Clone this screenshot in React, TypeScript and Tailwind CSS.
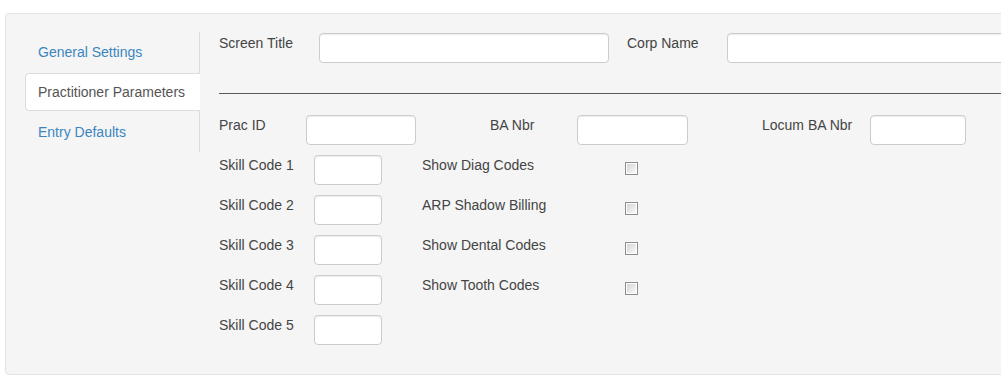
import React from 'react';

const inputCls =
  'shrink-0 h-[30px] bg-white border border-[#cccccc] rounded-[4px] shadow-[inset_0_1px_1px_rgba(0,0,0,0.075)] outline-none px-2 text-[14px]';

function Checkbox() {
  return (
    <span className="shrink-0 mt-[7px] block w-[13px] h-[13px] border border-[#8e8e8e] bg-white p-px">
      <span className="block w-full h-full bg-gradient-to-br from-[#d4d4d4] to-[#fafafa]" />
    </span>
  );
}

const skills = [
  { code: 'Skill Code 1', flag: 'Show Diag Codes' },
  { code: 'Skill Code 2', flag: 'ARP Shadow Billing' },
  { code: 'Skill Code 3', flag: 'Show Dental Codes' },
  { code: 'Skill Code 4', flag: 'Show Tooth Codes' },
  { code: 'Skill Code 5', flag: '' },
];

export default function App() {
  return (
    <div className="w-[1001px] h-[383px] overflow-hidden bg-white font-['Liberation_Sans',Arial,sans-serif] text-[14px] leading-5 text-[#444444]">
      <div className="ml-[5px] mt-[13px] w-[1030px] h-[362px] bg-[#f5f5f5] border border-[#e3e3e3] rounded-[4px] pl-[19px] pt-[18px] flex items-start">
        {/* ─ Tabs ─ */}
        <div className="shrink-0 w-[175px] h-[120px] border-r border-[#dddddd] flex flex-col">
          <div className="h-[40px] flex items-center pl-[13px] text-[#3a85c0]">General Settings</div>
          <div className="h-[40px] py-px">
            <div className="h-[38px] -mr-px flex items-center pl-[12px] bg-white border border-r-0 border-[#dddddd] rounded-l-[4px] text-[#555555]">
              Practitioner Parameters
            </div>
          </div>
          <div className="h-[40px] flex items-center pl-[13px] text-[#3a85c0]">Entry Defaults</div>
        </div>

        {/* ─ Form ─ */}
        <div className="ml-[19px] pt-px flex flex-col flex-1 min-w-0">
          <div className="flex items-start">
            <label className="shrink-0 w-[100px]">Screen Title</label>
            <input className={`${inputCls} w-[290px]`} />
            <label className="shrink-0 ml-[18px] w-[100px]">Corp Name</label>
            <input className={`${inputCls} w-[320px]`} />
          </div>

          <div className="mt-[30px] h-px bg-[#5a5a5a]" />

          <div className="mt-[21px] flex items-start">
            <label className="shrink-0 w-[87px]">Prac ID</label>
            <input className={`${inputCls} w-[110px]`} />
            <label className="shrink-0 ml-[74px] w-[87px]">BA Nbr</label>
            <input className={`${inputCls} w-[111px]`} />
            <label className="shrink-0 ml-[74px] w-[108px]">Locum BA Nbr</label>
            <input className={`${inputCls} w-[96px]`} />
          </div>

          {skills.map((s) => (
            <div key={s.code} className="mt-[10px] flex items-start">
              <label className="shrink-0 w-[95px]">{s.code}</label>
              <input className={`${inputCls} w-[68px]`} />
              {s.flag && (
                <>
                  <label className="shrink-0 ml-[40px] w-[203px]">{s.flag}</label>
                  <Checkbox />
                </>
              )}
            </div>
          ))}
        </div>
      </div>
    </div>
  );
}
